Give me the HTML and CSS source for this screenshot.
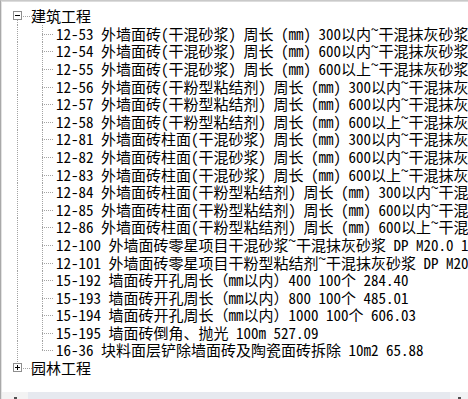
FILE: index.html
```html
<!DOCTYPE html>
<html lang="zh-CN">
<head>
<meta charset="utf-8">
<title>定额树</title>
<link rel="stylesheet" href="styles.css">
</head>
<body>
<div class="panel">
  <div class="inner">
    <div class="tree">
      <div class="row root open">
        <span class="c1"><span class="box minus"></span></span>
        <span class="label">建筑工程</span>
      </div>
      <div class="row leaf"><span class="c1"></span><span class="c2"></span><span class="label">12-53 外墙面砖(干混砂浆) 周长 (mm) 300以内<span class="tl">~</span>干混抹灰砂浆 DP M20.0</span></div>
      <div class="row leaf"><span class="c1"></span><span class="c2"></span><span class="label">12-54 外墙面砖(干混砂浆) 周长 (mm) 600以内<span class="tl">~</span>干混抹灰砂浆 DP M20.0</span></div>
      <div class="row leaf"><span class="c1"></span><span class="c2"></span><span class="label">12-55 外墙面砖(干混砂浆) 周长 (mm) 600以上<span class="tl">~</span>干混抹灰砂浆 DP M20.0</span></div>
      <div class="row leaf"><span class="c1"></span><span class="c2"></span><span class="label">12-56 外墙面砖(干粉型粘结剂) 周长 (mm) 300以内<span class="tl">~</span>干混抹灰砂浆 DP M20.0</span></div>
      <div class="row leaf"><span class="c1"></span><span class="c2"></span><span class="label">12-57 外墙面砖(干粉型粘结剂) 周长 (mm) 600以内<span class="tl">~</span>干混抹灰砂浆 DP M20.0</span></div>
      <div class="row leaf"><span class="c1"></span><span class="c2"></span><span class="label">12-58 外墙面砖(干粉型粘结剂) 周长 (mm) 600以上<span class="tl">~</span>干混抹灰砂浆 DP M20.0</span></div>
      <div class="row leaf"><span class="c1"></span><span class="c2"></span><span class="label">12-81 外墙面砖柱面(干混砂浆) 周长 (mm) 300以内<span class="tl">~</span>干混抹灰砂浆 DP M20.0</span></div>
      <div class="row leaf"><span class="c1"></span><span class="c2"></span><span class="label">12-82 外墙面砖柱面(干混砂浆) 周长 (mm) 600以内<span class="tl">~</span>干混抹灰砂浆 DP M20.0</span></div>
      <div class="row leaf"><span class="c1"></span><span class="c2"></span><span class="label">12-83 外墙面砖柱面(干混砂浆) 周长 (mm) 600以上<span class="tl">~</span>干混抹灰砂浆 DP M20.0</span></div>
      <div class="row leaf"><span class="c1"></span><span class="c2"></span><span class="label">12-84 外墙面砖柱面(干粉型粘结剂) 周长 (mm) 300以内<span class="tl">~</span>干混抹灰砂浆 DP M20.0</span></div>
      <div class="row leaf"><span class="c1"></span><span class="c2"></span><span class="label">12-85 外墙面砖柱面(干粉型粘结剂) 周长 (mm) 600以内<span class="tl">~</span>干混抹灰砂浆 DP M20.0</span></div>
      <div class="row leaf"><span class="c1"></span><span class="c2"></span><span class="label">12-86 外墙面砖柱面(干粉型粘结剂) 周长 (mm) 600以上<span class="tl">~</span>干混抹灰砂浆 DP M20.0</span></div>
      <div class="row leaf"><span class="c1"></span><span class="c2"></span><span class="label">12-100 外墙面砖零星项目干混砂浆<span class="tl">~</span>干混抹灰砂浆 DP M20.0 1m2</span></div>
      <div class="row leaf"><span class="c1"></span><span class="c2"></span><span class="label">12-101 外墙面砖零星项目干粉型粘结剂<span class="tl">~</span>干混抹灰砂浆 DP M20.0 1m2</span></div>
      <div class="row leaf"><span class="c1"></span><span class="c2"></span><span class="label">15-192 墙面砖开孔周长（mm以内）400 100个 284.40</span></div>
      <div class="row leaf"><span class="c1"></span><span class="c2"></span><span class="label">15-193 墙面砖开孔周长（mm以内）800 100个 485.01</span></div>
      <div class="row leaf"><span class="c1"></span><span class="c2"></span><span class="label">15-194 墙面砖开孔周长（mm以内）1000 100个 606.03</span></div>
      <div class="row leaf"><span class="c1"></span><span class="c2"></span><span class="label">15-195 墙面砖倒角、抛光 100m 527.09</span></div>
      <div class="row leaf last"><span class="c1"></span><span class="c2"></span><span class="label">16-36 块料面层铲除墙面砖及陶瓷面砖拆除 10m2 65.88</span></div>
      <div class="row root closed">
        <span class="c1"><span class="box plus"></span></span>
        <span class="label">园林工程</span>
      </div>
    </div>
    <div class="hscroll">
      <span class="sb-btn left"><span class="arrow"></span></span>
      <span class="sb-track"></span>
      <span class="sb-btn right"><span class="arrow"></span></span>
    </div>
  </div>
</div>
</body>
</html>
```

FILE: styles.css
```css
html, body {
  margin: 0;
  padding: 0;
  overflow: hidden;
  background: #ffffff;
}

.panel {
  width: 468px;
  height: 409px;
  box-sizing: border-box;
  border-top: 1px solid #c9c9c9;
  border-left: 1px solid #a9a9a9;
}

.inner {
  height: 100%;
  box-sizing: border-box;
  border-top: 1px solid #dcdcdc;
  border-left: 1px solid #e2e2e2;
  display: flex;
  flex-direction: column;
  overflow: hidden;
}

.tree {
  flex: 1;
  padding-top: 5.2px;
  overflow: hidden;
  font-family: "Noto Sans Mono CJK SC", "Noto Sans CJK SC", "DejaVu Sans Mono", monospace;
  font-size: 15px;
  color: #000000;
}

.row {
  display: flex;
  align-items: stretch;
  height: 17.6px;
  line-height: 17.6px;
  white-space: nowrap;
}

.label {
  display: block;
  white-space: pre;
}

.tl {
  vertical-align: 5px;
  line-height: 0;
}

.c1 {
  flex: none;
  width: 30px;
  display: flex;
  align-items: center;
  background-repeat: no-repeat;
}

.c2 {
  flex: none;
  width: 24px;
  background-repeat: no-repeat;
}

/* dotted connectors */
.leaf .c1 {
  background-image: repeating-linear-gradient(to bottom, #a3a3a3 0 1px, transparent 1px 2px);
  background-size: 1px 100%;
  background-position: 15px 0;
}

.leaf .c2 {
  background-image:
    repeating-linear-gradient(to bottom, #a3a3a3 0 1px, transparent 1px 2px),
    repeating-linear-gradient(to right, #a3a3a3 0 1px, transparent 1px 2px);
  background-size: 1px 100%, 12px 1px;
  background-position: 10px 0, 10px 9px;
}

.leaf.last .c2 {
  background-size: 1px 9px, 12px 1px;
}

.root .c1 {
  background-image:
    repeating-linear-gradient(to bottom, #a3a3a3 0 1px, transparent 1px 2px),
    repeating-linear-gradient(to right, #a3a3a3 0 1px, transparent 1px 2px);
  background-size: 1px 9px, 9px 1px;
  background-position: 15px 100%, 21px 9px;
}

.root.closed .c1 {
  background-position: 15px 0, 21px 9px;
}

.root .label {
  margin-left: -1px;
}

/* expand / collapse box */
.box {
  position: relative;
  width: 9px;
  height: 9px;
  margin-left: 11px;
  box-sizing: border-box;
  border: 1px solid #8e8e8e;
  background: #ffffff;
}

.box::before {
  content: "";
  position: absolute;
  left: 1px;
  top: 3px;
  width: 5px;
  height: 1px;
  background: #000000;
}

.box.plus::after {
  content: "";
  position: absolute;
  left: 3px;
  top: 1px;
  width: 1px;
  height: 5px;
  background: #000000;
}

/* horizontal scrollbar */
.hscroll {
  flex: none;
  height: 17px;
  display: flex;
  background: #eef0f4;
}

.sb-btn {
  flex: none;
  width: 26px;
  background: #f3f3f3;
  display: flex;
  justify-content: center;
  padding-top: 5px;
  box-sizing: border-box;
}

.sb-btn.right {
  width: 18px;
  background: #f1f2f4;
}

.sb-track {
  flex: 1;
  background: #e6e9ef;
}

.arrow {
  width: 3px;
  height: 2px;
  background: #505050;
}
```
